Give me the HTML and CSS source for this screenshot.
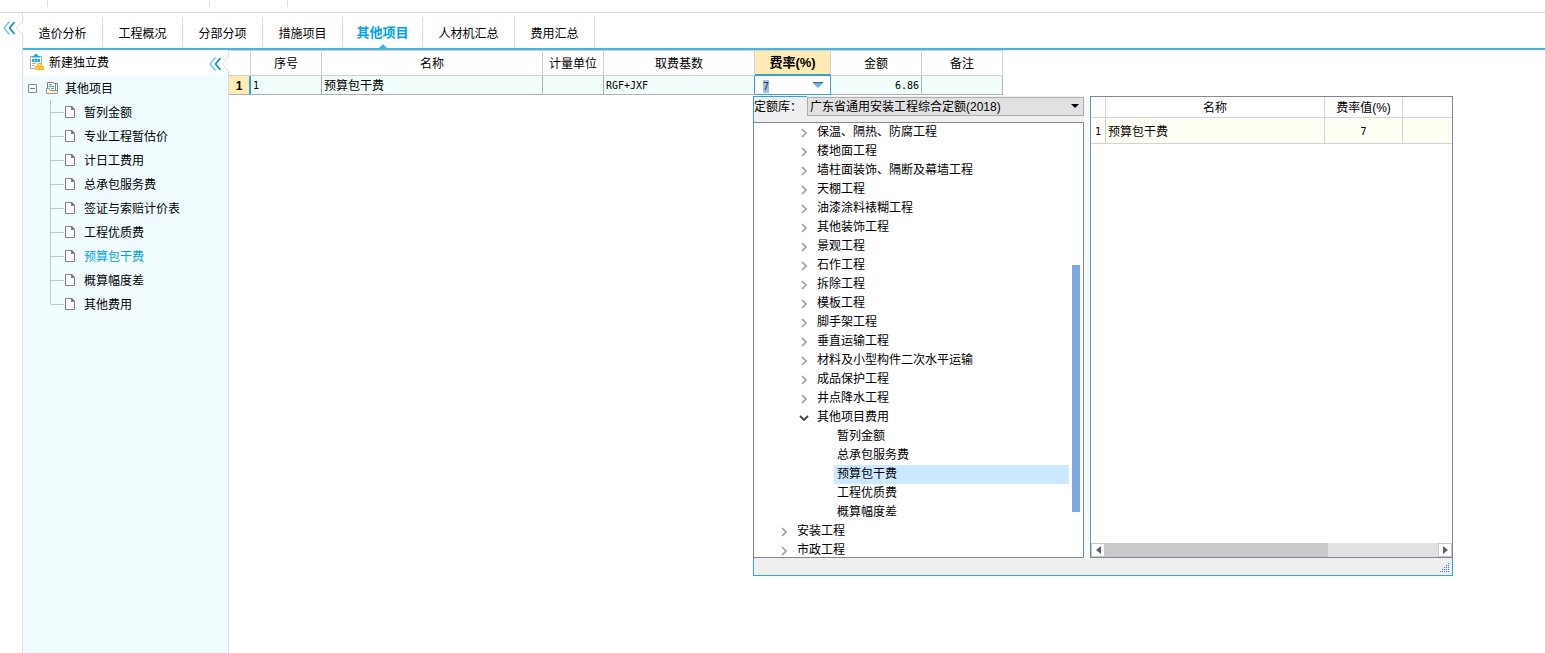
FILE: index.html
```html
<!DOCTYPE html>
<html lang="zh-CN">
<head>
<meta charset="utf-8">
<title>其他项目</title>
<link rel="stylesheet" href="styles.css">
</head>
<body>
<svg class="defs" aria-hidden="true">
  <symbol id="collapse" viewBox="0 0 12 14"><path d="M6.500 .5 1 7l5.500 6.500" fill="none" stroke="#5fc0e0" stroke-width="1.200"/><path d="M11.500 1 6.500 7l5 6" fill="none" stroke="#1590b8" stroke-width="1.700"/></symbol>
  <symbol id="page" viewBox="0 0 10 12"><path d="M.5 .5h6l3 3v8h-9z" fill="#fff" stroke="#808080"/><path d="M6 0h1l3 3v1H6z" fill="#808080"/></symbol>
  <symbol id="chev" viewBox="0 0 6 10"><path d="M1 1l4 4-4 4" fill="none" stroke="#a0a0a0" stroke-width="1.700"/></symbol>
</svg>
<header class="top-strip"><i class="sep sep-a"></i><i class="sep sep-b"></i><i class="sep sep-c"></i></header>
<div class="app">
  <div class="rail">
    <button class="collapse" aria-label="收起"><svg width="12" height="14"><use href="#collapse"/></svg></button>
    <svg class="notch" width="7" height="14" viewBox="0 0 7 14"><path d="M7 .5 .5 7 7 13.500z" fill="#fff"/><path d="M6.500 .5 .5 7l6 6.500" fill="none" stroke="#dcdcdc"/></svg>
  </div>
  <div class="main">
    <nav class="tabs">
      <button class="tab">造价分析</button>
      <button class="tab">工程概况</button>
      <button class="tab">分部分项</button>
      <button class="tab">措施项目</button>
      <button class="tab active">其他项目</button>
      <button class="tab wide">人材机汇总</button>
      <button class="tab">费用汇总</button>
    </nav>
    <div class="workspace">
      <aside class="sidebar">
        <div class="side-head">
          <button class="new-fee">
            <svg width="14" height="16" viewBox="0 0 14 16"><path d="M.5 2.500h11v12H.5z" fill="#fff" stroke="#a8a8a8"/><path d="M2 3.500V2h2V1h1V0h2v1h1v1h2v1.500z" fill="#19b0e0"/><path d="M2 5h8v3H2z" fill="#19b0e0"/><path d="M4 6h1v1H4zM7 6h1v1H7z" fill="#fff"/><path d="M2 9.500h4M2 11.500h3" stroke="#b0b0b0"/><path d="M7.500 9.500h4v3h-4zM5.500 12.500h4v3h-4zM9.500 12.500h4v3h-4z" fill="#ffd35a" stroke="#f7b41c"/></svg>
            <span>新建独立费</span>
          </button>
          <button class="collapse" aria-label="收起"><svg width="12" height="14"><use href="#collapse"/></svg></button>
          <svg class="side-notch" width="7" height="26" viewBox="0 0 7 26"><path d="M2 0h4v26H2z" fill="#f0fcff"/><path d="M6.500 0v7M6.500 21v5" stroke="#dcdcdc"/><path d="M7 7 .5 14 7 21z" fill="#fff"/><path d="M6.500 7.500 .5 14l6 6.500" fill="none" stroke="#dcdcdc"/></svg>
        </div>
        <ul class="tree">
          <li class="root">
            <svg width="9" height="9" viewBox="0 0 9 9"><path d="M.5 .5h8v8h-8z" fill="#fff" stroke="#8c8c8c"/><path d="M2 4.500h5" stroke="#1b9dcc"/></svg>
            <svg class="root-icon" width="12" height="12" viewBox="0 0 12 12"><path d="M8.500 1.500h3v9" fill="none" stroke="#888"/><path d="M1.500 7.500v-7h6l2 2v6h-8z" fill="#fff" stroke="#808080"/><path d="M3 2.500h3M3 4.500h5M5 6.500h3" stroke="#3ba6c8"/><path d="M.5 6.500h3l1 2h7v3H.5z" fill="#fff4c5" stroke="#999"/></svg>
            <span>其他项目</span>
          </li>
          <li class="leaf"><svg width="10" height="12"><use href="#page"/></svg><span>暂列金额</span></li>
          <li class="leaf"><svg width="10" height="12"><use href="#page"/></svg><span>专业工程暂估价</span></li>
          <li class="leaf"><svg width="10" height="12"><use href="#page"/></svg><span>计日工费用</span></li>
          <li class="leaf"><svg width="10" height="12"><use href="#page"/></svg><span>总承包服务费</span></li>
          <li class="leaf"><svg width="10" height="12"><use href="#page"/></svg><span>签证与索赔计价表</span></li>
          <li class="leaf"><svg width="10" height="12"><use href="#page"/></svg><span>工程优质费</span></li>
          <li class="leaf current"><svg width="10" height="12"><use href="#page"/></svg><span>预算包干费</span></li>
          <li class="leaf"><svg width="10" height="12"><use href="#page"/></svg><span>概算幅度差</span></li>
          <li class="leaf"><svg width="10" height="12"><use href="#page"/></svg><span>其他费用</span></li>
        </ul>
      </aside>
      <section class="content">
        <table class="grid">
          <colgroup><col class="c-no"><col class="c-seq"><col class="c-name"><col class="c-unit"><col class="c-base"><col class="c-rate"><col class="c-sum"><col class="c-note"></colgroup>
          <thead>
            <tr><th></th><th>序号</th><th>名称</th><th>计量单位</th><th>取费基数</th><th class="rate-head">费率(%)</th><th>金额</th><th>备注</th></tr>
          </thead>
          <tbody>
            <tr>
              <td class="row-no">1</td><td class="mono">1</td><td>预算包干费</td><td></td><td class="before-rate mono">RGF+JXF</td>
              <td class="rate-cell">
                <div class="rate-edit">
                  <input class="rate-input mono" type="text" value="7" aria-label="费率">
                  <button class="drop" aria-label="展开"><svg width="10" height="6" viewBox="0 0 10 6"><path d="M0 1h10L5 6z" fill="#62b1dc"/><path d="M0 .5h10" stroke="#4b6575"/></svg></button>
                </div>
                <div class="popup">
                  <div class="panes">
                    <div class="left-pane">
                      <div class="lib">
                        <label for="lib">定额库：</label>
                        <div class="select-wrap">
                          <select id="lib"><option>广东省通用安装工程综合定额(2018)</option></select>
                          <svg width="8" height="4" viewBox="0 0 8 4"><path d="M0 0h8L4 4z" fill="#000"/></svg>
                        </div>
                      </div>
                      <div class="lib-box">
                        <ul class="lib-tree">
                          <li class="l2"><svg width="6" height="10"><use href="#chev"/></svg>保温、隔热、防腐工程</li>
                          <li class="l2"><svg width="6" height="10"><use href="#chev"/></svg>楼地面工程</li>
                          <li class="l2"><svg width="6" height="10"><use href="#chev"/></svg>墙柱面装饰、隔断及幕墙工程</li>
                          <li class="l2"><svg width="6" height="10"><use href="#chev"/></svg>天棚工程</li>
                          <li class="l2"><svg width="6" height="10"><use href="#chev"/></svg>油漆涂料裱糊工程</li>
                          <li class="l2"><svg width="6" height="10"><use href="#chev"/></svg>其他装饰工程</li>
                          <li class="l2"><svg width="6" height="10"><use href="#chev"/></svg>景观工程</li>
                          <li class="l2"><svg width="6" height="10"><use href="#chev"/></svg>石作工程</li>
                          <li class="l2"><svg width="6" height="10"><use href="#chev"/></svg>拆除工程</li>
                          <li class="l2"><svg width="6" height="10"><use href="#chev"/></svg>模板工程</li>
                          <li class="l2"><svg width="6" height="10"><use href="#chev"/></svg>脚手架工程</li>
                          <li class="l2"><svg width="6" height="10"><use href="#chev"/></svg>垂直运输工程</li>
                          <li class="l2"><svg width="6" height="10"><use href="#chev"/></svg>材料及小型构件二次水平运输</li>
                          <li class="l2"><svg width="6" height="10"><use href="#chev"/></svg>成品保护工程</li>
                          <li class="l2"><svg width="6" height="10"><use href="#chev"/></svg>井点降水工程</li>
                          <li class="l2 open"><svg width="10" height="6" viewBox="0 0 10 6"><path d="M1 1l4 4 4-4" fill="none" stroke="#404040" stroke-width="1.800"/></svg>其他项目费用</li>
                          <li class="l3">暂列金额</li>
                          <li class="l3">总承包服务费</li>
                          <li class="l3 selected">预算包干费</li>
                          <li class="l3">工程优质费</li>
                          <li class="l3">概算幅度差</li>
                          <li class="l1"><svg width="6" height="10"><use href="#chev"/></svg>安装工程</li>
                          <li class="l1"><svg width="6" height="10"><use href="#chev"/></svg>市政工程</li>
                        </ul>
                        <div class="vbar"><div class="vthumb"></div></div>
                      </div>
                    </div>
                    <div class="right-pane">
                      <table class="rates">
                        <colgroup><col class="r-no"><col class="r-name"><col class="r-rate"><col></colgroup>
                        <thead><tr><th></th><th>名称</th><th>费率值(%)</th><th></th></tr></thead>
                        <tbody><tr><td class="r-num mono">1</td><td>预算包干费</td><td class="center mono">7</td><td></td></tr></tbody>
                      </table>
                      <div class="hbar">
                        <button aria-label="向左"><svg width="5" height="8" viewBox="0 0 5 8"><path d="M5 0v8L0 4z" fill="#606068"/></svg></button>
                        <div class="htrack"><div class="hthumb"></div></div>
                        <button aria-label="向右"><svg width="5" height="8" viewBox="0 0 5 8"><path d="M0 0v8l5-4z" fill="#606068"/></svg></button>
                      </div>
                    </div>
                  </div>
                  <div class="status">
                    <svg width="10" height="10" viewBox="0 0 10 10" fill="none" stroke="#2c82c0" stroke-dasharray="1 1"><path d="M8 .5h1M6 2.500h3M4 4.500h5M2 6.500h7M0 8.500h9"/></svg>
                  </div>
                </div>
              </td>
              <td class="right mono">6.86</td><td></td>
            </tr>
          </tbody>
        </table>
      </section>
    </div>
  </div>
</div>
</body>
</html>
```

FILE: styles.css
```css
* { box-sizing: border-box; }
body {
  margin: 0;
  min-height: 100vh;
  display: flex;
  flex-direction: column;
  overflow-x: hidden;
  background: #fff;
  color: #000;
  font: 12px/16px "Liberation Sans", "Noto Sans CJK SC", sans-serif;
}
button {
  border: 0;
  padding: 0;
  background: none;
  color: inherit;
  font: inherit;
}
input, select { font: inherit; color: inherit; }
ul { list-style: none; margin: 0; padding: 0; }
svg { display: block; flex: none; }
.defs { display: none; }
.mono { font-family: "DejaVu Sans Mono", monospace; font-size: 10px; }

.top-strip { display: flex; height: 13px; border-bottom: 1px solid #dcdcdc; }
.sep { width: 1px; height: 7px; background: #dcdcdc; }
.sep-a { margin-left: 47px; }
.sep-b { margin-left: 161px; }
.sep-c { margin-left: 77px; }

.app { flex: 1; display: flex; }
.rail {
  width: 23px;
  display: flex;
  align-items: flex-start;
  justify-content: space-between;
  padding: 8px 0 0 3px;
  border-right: 1px solid #dcdcdc;
}
.notch { margin-right: -1px; }
.main { flex: 1; min-width: 0; display: flex; flex-direction: column; }
.tabs {
  display: flex;
  height: 37px;
  padding-top: 4px;
  border-bottom: 2px solid #45b5df;
}
.tab { width: 80px; padding-top: 2px; border-right: 1px solid #dcdcdc; }
.tab.wide { width: 92px; }
.tab.active { position: relative; padding-top: 0; color: #00a2e8; font-size: 13px; font-weight: 700; }
.tab.active::after {
  content: "";
  position: absolute;
  left: 50%;
  bottom: 0;
  margin-left: -4px;
  border: 4px solid transparent;
  border-top: 0;
  border-bottom-color: #45b5df;
}

.workspace { flex: 1; display: flex; }
.sidebar {
  flex: none;
  width: 206px;
  background: #f0fcff;
  border-right: 1px solid #dcdcdc;
}
.side-head { display: flex; align-items: center; height: 25px; background: #fff; }
.side-head .collapse { margin: 3px 1px 0 auto; }
.side-notch { margin-right: -1px; }
.new-fee { display: flex; gap: 5px; padding-left: 7px; }
.new-fee span { padding-top: 1px; }
.tree { padding-top: 1px; }
.tree span { padding-top: 2px; }
.root { display: flex; align-items: center; height: 24px; padding-left: 5px; }
.root-icon { margin: 0 7px 0 9px; }
.leaf {
  display: flex;
  align-items: center;
  height: 24px;
  margin-left: 27px;
  border-left: 1px solid #c4c8c8;
}
.leaf::before { content: ""; width: 13px; height: 1px; background: #c4c8c8; }
.leaf svg { margin: 0 9px 0 1px; }
.leaf:last-child {
  border: 0;
  padding-left: 1px;
  background: linear-gradient(#c4c8c8, #c4c8c8) 0 0 / 1px 12px no-repeat;
}
.current span { color: #00a2dc; }

.content { flex: 1; min-width: 0; }
table { table-layout: fixed; border-spacing: 0; }
th { font-weight: 400; padding: 2px 0 0; }
.grid { width: 774px; border-top: 1px solid #d0d0d0; }
.c-no { width: 22px; }
.c-seq { width: 71px; }
.c-name { width: 221px; }
.c-unit { width: 61px; }
.c-base { width: 151px; }
.c-rate { width: 76px; }
.c-sum { width: 91px; }
.c-note { width: 81px; }
.grid > thead th { height: 25px; border: solid #d0d0d0; border-width: 0 1px 1px 0; }
.grid > thead .rate-head {
  padding: 0;
  background: #ffebb4;
  border-bottom: 2px solid #38a2cc;
  font-size: 13px;
  font-weight: 700;
}
.grid > tbody > tr > td {
  height: 19px;
  padding: 2px 2px 0;
  background: #f0fdfa;
  border: solid #b0b0b0;
  border-width: 0 1px 1px 0;
}
.grid > tbody > tr > .row-no {
  background: #ffebb4;
  border-right: 2px solid #38a2cc;
  font-weight: 700;
  text-align: center;
}
.grid > tbody > tr > .before-rate { border-right-color: #38a2cc; }
.grid > tbody > tr > .rate-cell {
  position: relative;
  padding: 0;
  background: #fff;
  border-color: #38a2cc;
}
.grid > tbody > tr > .right { text-align: right; }
.rate-edit { display: flex; align-items: center; justify-content: space-between; padding: 0 7px 0 8px; }
.rate-input {
  width: 6px;
  height: 13px;
  margin-top: 3px;
  padding: 0;
  border: 0;
  background: #9dc0f0;
  color: #333;
}

.popup {
  position: absolute;
  z-index: 2;
  top: 100%;
  left: -2px;
  width: 700px;
  height: 480px;
  margin-top: 2px;
  display: flex;
  flex-direction: column;
  background: #efefef;
}
.panes { flex: 1; min-height: 0; display: flex; gap: 6px; background: #f0fcff; }
.left-pane { width: 331px; display: flex; flex-direction: column; background: #efefef; }
.lib {
  display: flex;
  align-items: flex-start;
  height: 26px;
  border-left: 1px solid #38a2cc;
}
.lib label {
  width: 53px;
  border-top: 1px solid #38a2cc;
  line-height: 21px;
  white-space: nowrap;
}
.select-wrap { position: relative; flex: 1; padding-top: 1px; }
.select-wrap select {
  display: block;
  width: 100%;
  height: 19px;
  padding: 0 16px 0 2px;
  appearance: none;
  border: 1px solid #adadad;
  border-radius: 0;
  background: #e1e1e1;
}
.select-wrap svg { position: absolute; right: 5px; top: 8px; pointer-events: none; }
.lib-box {
  flex: 1;
  min-height: 0;
  display: flex;
  overflow: hidden;
  padding-right: 3px;
  border: 1px solid #828790;
  background: #fff;
}
.lib-tree { flex: 1; line-height: 19px; }
.lib-tree li { display: flex; align-items: center; height: 19px; }
.lib-tree .l1 { padding-left: 27px; }
.lib-tree .l2 { padding-left: 47px; }
.lib-tree .l1 svg, .lib-tree .l2 svg { margin-right: 10px; }
.lib-tree .l2.open { padding-left: 45px; }
.lib-tree .l2.open svg { margin-right: 8px; }
.lib-tree .l3 { margin-left: 80px; padding-left: 3px; }
.lib-tree .selected { background: #cce8ff; }
.vbar { width: 11px; padding: 142px 0 0 3px; }
.vthumb { height: 247px; background: #7fa6e6; }

.right-pane {
  flex: 1;
  min-width: 0;
  display: flex;
  flex-direction: column;
  justify-content: space-between;
  border: 1px solid #828790;
  background: #fff;
}
.rates { width: 100%; }
.r-no { width: 15px; }
.r-name { width: 219px; }
.r-rate { width: 78px; }
.rates th { height: 21px; border: solid #d4d4d4; border-width: 0 1px 1px 0; }
.rates td {
  height: 26px;
  padding: 2px 2px 0;
  background: #fffff4;
  border: solid #d4d4d4;
  border-width: 0 1px 1px 0;
}
.rates th:last-child, .rates td:last-child { border-right: 0; }
.rates .center { text-align: center; }
.rates .r-num { padding: 2px 0 0; background: #fff; text-align: center; }
.hbar { display: flex; height: 14px; background: #e1e1e1; }
.hbar button {
  width: 14px;
  display: flex;
  align-items: center;
  justify-content: center;
  border: 1px solid #c8c8c8;
  background: #fff;
}
.htrack { flex: 1; display: flex; }
.hthumb { width: 67%; background: #cacaca; }
.status {
  display: flex;
  justify-content: flex-end;
  align-items: flex-end;
  height: 18px;
  padding: 0 2px 2px 0;
  border: solid #38a2cc;
  border-width: 0 1px 1px 1px;
}
```
